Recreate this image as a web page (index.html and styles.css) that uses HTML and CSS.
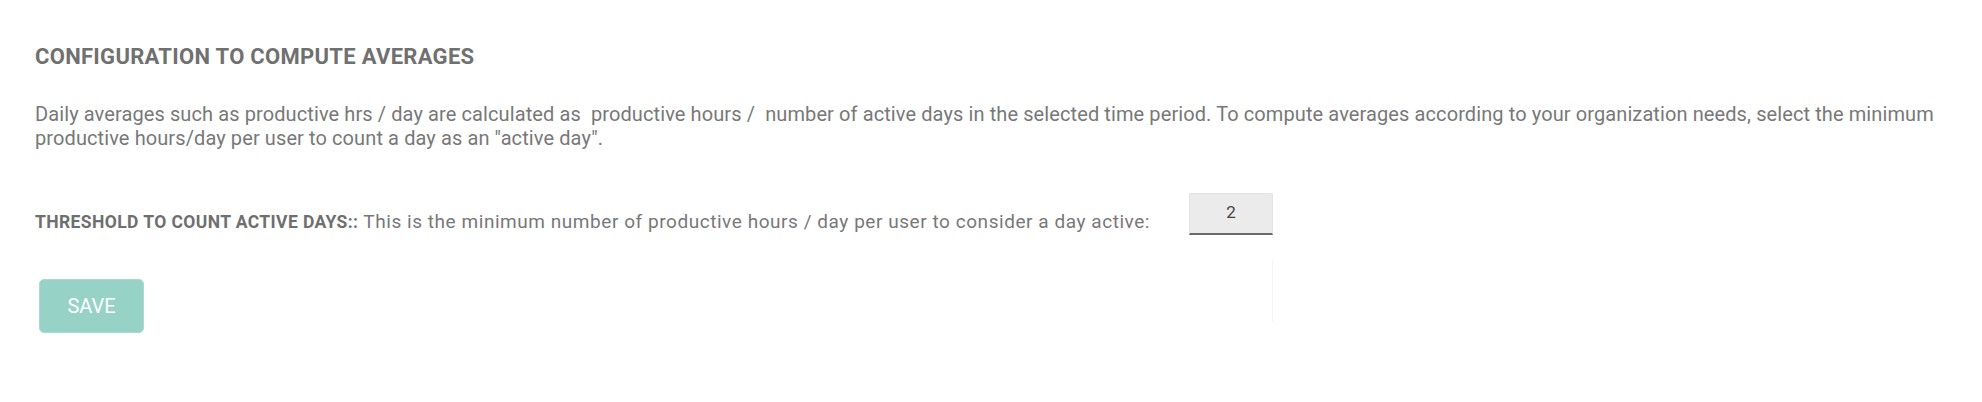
FILE: index.html
```html
<!DOCTYPE html>
<html lang="en">
<head>
    <meta charset="UTF-8">
    <meta name="viewport" content="width=device-width, initial-scale=1.0">
    <title>Configuration to compute averages</title>
    <link rel="stylesheet" href="styles.css">
</head>
<body>
    <div class="container">
        <h2 class="title">CONFIGURATION TO COMPUTE AVERAGES</h2>
        <p class="description">Daily averages such as productive hrs / day are calculated as &nbsp;productive hours / &nbsp;number of active days in the selected time period. To compute averages according to your organization needs, select the minimum productive hours/day per user to count a day as an "active day".</p>

        <div class="threshold">
            <p class="threshold-text"><span class="threshold-label">THRESHOLD TO COUNT ACTIVE DAYS::</span> This is the minimum number of productive hours / day per user to consider a day active:</p>
            <div class="threshold-field">
                <input type="text" class="threshold-input" id="threshold" value="2">
                <div class="field-shadow"></div>
            </div>
        </div>

        <button class="save-btn" disabled>SAVE</button>
    </div>
</body>
</html>
```

FILE: styles.css
```css
body {
    margin: 0;
    font-family: Roboto, "Liberation Sans", Arial, sans-serif;
    background-color: #ffffff;
    color: #787878;
}
.container {
    padding: 44px 35px 0 35px;
}
.title {
    margin: 0;
    font-size: 22px;
    line-height: 25px;
    font-weight: 700;
    letter-spacing: 0.3px;
    color: #707070;
}
.description {
    margin: 33px 0 0 0;
    font-size: 20px;
    line-height: 24px;
    letter-spacing: 0.1px;
}
.threshold {
    display: flex;
    align-items: flex-end;
    margin-top: 43px;
    height: 42px;
}
.threshold-text {
    margin: 0 0 2px 0;
    font-size: 19px;
    line-height: 22px;
    letter-spacing: 0.55px;
}
.threshold-label {
    font-weight: 700;
    font-size: 17.5px;
    letter-spacing: 0.4px;
    color: #6f6f6f;
}
.threshold-field {
    align-self: flex-start;
    margin-left: 39px;
    width: 84px;
}
.threshold-input {
    display: block;
    box-sizing: border-box;
    width: 84px;
    height: 42px;
    margin: 0;
    padding: 0 0 4px 0;
    border: 1px solid #e2e2e2;
    border-bottom: 2px solid #6a6a6a;
    border-radius: 2px 2px 0 0;
    background: #ebebeb;
    font-family: Roboto, "Liberation Sans", Arial, sans-serif;
    font-size: 17px;
    color: #444444;
    text-align: center;
}
.field-shadow {
    height: 62px;
    margin-top: 25px;
    border-right: 1px solid #f4f4f4;
}
.save-btn {
    display: block;
    width: 105px;
    height: 54px;
    margin: 44px 0 0 4px;
    padding: 0;
    border: 1px solid #a6dbcf;
    border-radius: 5px;
    background: #96d3c6;
    color: #ffffff;
    font-family: Roboto, "Liberation Sans", Arial, sans-serif;
    font-size: 20px;
    cursor: pointer;
}
```
